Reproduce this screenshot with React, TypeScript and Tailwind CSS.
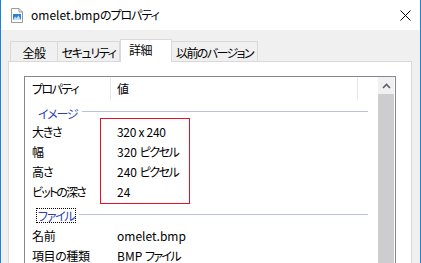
import React from "react";

const font = "font-['Noto_Sans_CJK_JP','Noto_Sans',sans-serif] [font-feature-settings:'palt']";

function DocIcon() {
  return (
    <svg width="12" height="15" viewBox="0 0 12 15" className="block">
      <path d="M0.5 0.5 H8 L11.5 4 V14.5 H0.5 Z" fill="#fff" stroke="#9a9a9a" />
      <path d="M8 0.5 V4 H11.5" fill="none" stroke="#9a9a9a" />
      <rect x="2" y="6" width="8" height="6" fill="#2f7ed8" />
      <path d="M2 12 L4 8.5 L5.5 10 L7.5 7.5 L10 12 Z" fill="#bfe0ff" />
    </svg>
  );
}

function Row({ name, value, nt, vt }: { name: string; value: React.ReactNode; nt: string; vt?: string }) {
  return (
    <div className="flex h-[20px] items-center text-[12px] text-black whitespace-nowrap">
      <div className="w-[86px] pl-[7px] shrink-0">
        <span className={nt}>{name}</span>
      </div>
      <div className={`pl-[6px] ${vt ?? ""}`}>{value}</div>
    </div>
  );
}

function Group({ label, focus, h }: { label: string; focus?: boolean; h: string }) {
  return (
    <div className={`flex items-center ${h}`}>
      <div className="pl-[11px] shrink-0">
        <span
          className={`inline-block px-[1px] leading-[13px] text-[12px] text-[#2a3fbd] tracking-[-1.3px] border border-dotted whitespace-nowrap ${
            focus ? "border-black" : "border-transparent"
          }`}
        >
          {label}
        </span>
      </div>
      <div className="ml-[3px] h-px flex-1 bg-[#b9bfdc] mr-[10px]" />
    </div>
  );
}

export default function App() {
  return (
    <div className={`relative w-[421px] h-[263px] overflow-hidden bg-[#f0f0f0] border-x border-[#1883d7] flex flex-col ${font}`}>
      {/* title bar */}
      <div className="h-[30px] bg-white flex items-center shrink-0">
        <div className="ml-[10px]">
          <DocIcon />
        </div>
        <div className="ml-[8px] text-[12px] text-black whitespace-nowrap">
          omelet.bmp<span className="tracking-[-1px]">のプロパティ</span>
        </div>
        <div className="ml-auto mr-[9px]">
          <svg width="11" height="11" viewBox="0 0 11 11" className="block">
            <path d="M0.5 0.5 L10.5 10.5 M10.5 0.5 L0.5 10.5" stroke="#000" strokeWidth="1" />
          </svg>
        </div>
      </div>

      {/* body */}
      <div className="flex-1 flex flex-col pl-[7px] pr-[8px]">
        {/* tabs */}
        <div className="h-[31px] flex items-end pl-[2px] shrink-0 text-[12px] text-black whitespace-nowrap">
          <div className="w-[48px] h-[20px] border border-b-0 border-[#d9d9d9] bg-[#f0f0f0] flex items-center justify-center pt-[2px]">
            <span className="tracking-[-0.5px]">全般</span>
          </div>
          <div className="w-[62px] h-[20px] border border-b-0 border-l-0 border-[#d9d9d9] bg-[#f0f0f0] flex items-center justify-center pt-[2px]">
            <span className="tracking-[-1.4px]">セキュリティ</span>
          </div>
          <div className="relative z-10 -mb-px w-[52px] h-[23px] border border-b-0 border-[#d9d9d9] bg-white flex items-center justify-start pl-[8px] pb-[2px]">
            <span className="tracking-[-0.5px]">詳細</span>
          </div>
          <div className="w-[86px] h-[20px] border border-b-0 border-l-0 border-[#d9d9d9] bg-[#f0f0f0] flex items-center justify-center pt-[2px]">
            <span className="tracking-[-1.6px]">以前のバージョン</span>
          </div>
        </div>

        {/* panel */}
        <div className="flex-1 border border-[#d9d9d9] bg-white pt-[14px] px-[15px] flex flex-col">
          <div className="flex-1 border border-[#828790] bg-white flex">
            <div className="flex-1 flex flex-col">
              {/* header */}
              <div className="h-[24px] flex items-stretch text-[12px] text-black whitespace-nowrap">
                <div className="w-[86px] pl-[7px] flex items-center border-r border-[#e5e5e5] my-[1px] shrink-0">
                  <span className="tracking-[-1.5px]">プロパティ</span>
                </div>
                <div className="w-[247px] pl-[6px] flex items-center border-r border-[#e5e5e5] my-[1px] shrink-0">値</div>
              </div>
              <Group label="イメージ" h="h-[21px]" />
              <Row name="大きさ" nt="tracking-[-1.3px]" value="320 x 240" vt="tracking-[-0.3px]" />
              <Row name="幅" nt="" value={<>320 <span className="tracking-[-1.5px]">ピクセル</span></>} />
              <Row name="高さ" nt="tracking-[-1px]" value={<>240 <span className="tracking-[-1.5px]">ピクセル</span></>} />
              <Row name="ビットの深さ" nt="tracking-[-1.8px]" value="24" />
              <Group label="ファイル" focus h="h-[24px]" />
              <Row name="名前" nt="tracking-[-0.3px]" value="omelet.bmp" />
              <Row name="項目の種類" nt="tracking-[-0.4px]" value={<>BMP <span className="tracking-[-1.6px]">ファイル</span></>} />
            </div>
            {/* scrollbar */}
            <div className="w-[16px] mr-px bg-[#f0f0f0] flex flex-col shrink-0">
              <div className="h-[17px] flex items-center justify-center">
                <svg width="9" height="6" viewBox="0 0 9 6" className="block">
                  <path d="M1 5 L4.5 1.5 L8 5" fill="none" stroke="#606060" strokeWidth="1.6" />
                </svg>
              </div>
              <div className="flex-1 bg-[#cdcdcd]" />
            </div>
          </div>
        </div>
      </div>

      {/* red annotation box */}
      <div className="absolute left-[99px] top-[118px] w-[90px] h-[86px] border border-[#e81123] pointer-events-none" />
    </div>
  );
}
